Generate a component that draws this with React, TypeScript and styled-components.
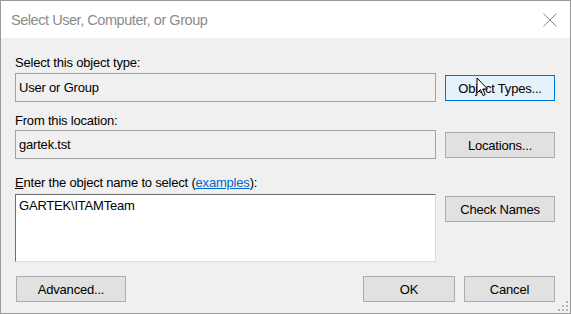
import React from 'react';
import styled, { createGlobalStyle } from 'styled-components';

const GlobalStyle = createGlobalStyle`
  html, body {
    margin: 0;
    padding: 0;
    background: #f0f0f0;
  }
  body {
    font-family: "Liberation Sans", Arial, sans-serif;
    color: #000;
  }
`;

const Window = styled.div`
  position: relative;
  width: 571px;
  height: 314px;
  box-sizing: border-box;
  border: 1px solid #9b9b9b;
  background: #f0f0f0;
  display: flex;
  flex-direction: column;
  overflow: hidden;
  letter-spacing: -0.2px;
`;

const TitleBar = styled.div`
  height: 37px;
  flex: none;
  background: #fff;
  display: flex;
  align-items: center;
  justify-content: space-between;
  padding: 0 13px 0 10px;
`;

const Title = styled.span`
  font-size: 14.5px;
  color: #8c8c8c;
  letter-spacing: -0.45px;
`;

const CloseIcon = styled.svg`
  width: 14px;
  height: 14px;
  margin-top: 1px;
`;

const Body = styled.div`
  display: flex;
  flex-direction: column;
  padding: 17px 15px 0 14px;
`;

const Section = styled.div<{ $top: number }>`
  margin-top: ${({ $top }) => $top}px;
`;

const Label = styled.div<{ $gap: number }>`
  font-size: 13px;
  line-height: 15px;
  height: 15px;
  width: 421px;
  margin-bottom: ${({ $gap }) => $gap}px;
  white-space: nowrap;
`;

const Key = styled.span`
  text-decoration: underline;
`;

const Link = styled.a`
  color: #0066cc;
  text-decoration: underline;
`;

const Row = styled.div`
  display: flex;
  gap: 9px;
  align-items: flex-start;
`;

const TextBox = styled.div`
  width: 421px;
  height: 29px;
  box-sizing: border-box;
  border: 1px solid #a2a2a2;
  background: #f0f0f0;
  padding: 0 3px;
  font-size: 13px;
  display: flex;
  align-items: center;
`;

const TextArea = styled.div`
  width: 421px;
  height: 68px;
  box-sizing: border-box;
  background: #fff;
  border-top: 1px solid #6e6e6e;
  border-left: 1px solid #6e6e6e;
  border-right: 1px solid #dcdcdc;
  border-bottom: 1px solid #dcdcdc;
  padding: 3px 3px;
  font-size: 13px;
  line-height: 15px;
`;

const Button = styled.div<{ $width?: number; $hover?: boolean }>`
  width: ${({ $width }) => $width ?? 110}px;
  height: 26px;
  margin-top: 2px;
  box-sizing: border-box;
  border: 1px solid ${({ $hover }) => ($hover ? '#0078d7' : '#adadad')};
  background: ${({ $hover }) => ($hover ? '#e5f1fb' : '#e1e1e1')};
  font-size: 13px;
  display: flex;
  align-items: center;
  justify-content: center;
  flex: none;
`;

const Footer = styled.div`
  margin-top: 12px;
  padding-left: 1px;
  display: flex;
  justify-content: space-between;
`;

const FooterRight = styled.div`
  display: flex;
  gap: 9px;
`;

const Cursor = styled.svg`
  position: absolute;
  left: 475px;
  top: 76px;
  width: 13px;
  height: 20px;
`;

const Grip = styled.svg`
  position: absolute;
  right: 2px;
  bottom: 2px;
  width: 10px;
  height: 10px;
`;

const App: React.FC = () => {
  return (
    <>
      <GlobalStyle />
      <Window>
        <TitleBar>
          <Title>Select User, Computer, or Group</Title>
          <CloseIcon viewBox="0 0 14 14">
            <path d="M0.5 0.5 L13.5 13.5 M13.5 0.5 L0.5 13.5" stroke="#8a8a8a" strokeWidth="1" />
          </CloseIcon>
        </TitleBar>
        <Body>
          <Section $top={0}>
            <Label $gap={3}>Select this object type:</Label>
            <Row>
              <TextBox>User or Group</TextBox>
              <Button $hover>Object Types...</Button>
            </Row>
          </Section>
          <Section $top={11}>
            <Label $gap={2}>From this location:</Label>
            <Row>
              <TextBox>gartek.tst</TextBox>
              <Button>Locations...</Button>
            </Row>
          </Section>
          <Section $top={16}>
            <Label $gap={4}>
              <Key>E</Key>nter the object name to select (<Link>examples</Link>):
            </Label>
            <Row>
              <TextArea>GARTEK\ITAMTeam</TextArea>
              <Button>Check Names</Button>
            </Row>
          </Section>
          <Footer>
            <Button $width={110}>Advanced...</Button>
            <FooterRight>
              <Button $width={92}>OK</Button>
              <Button $width={91}>Cancel</Button>
            </FooterRight>
          </Footer>
        </Body>
        <Cursor viewBox="0 0 13 20">
          <path
            d="M1 1 L1 16 L4.5 12.5 L7 18.5 L9.2 17.6 L6.8 12 L11.5 12 Z"
            fill="#fff"
            stroke="#000"
            strokeWidth="1"
            strokeLinejoin="miter"
          />
        </Cursor>
        <Grip viewBox="0 0 10 10">
          <g fill="#b4b4b4">
            <rect x="8" y="0" width="2" height="2" />
            <rect x="4" y="4" width="2" height="2" />
            <rect x="8" y="4" width="2" height="2" />
            <rect x="0" y="8" width="2" height="2" />
            <rect x="4" y="8" width="2" height="2" />
            <rect x="8" y="8" width="2" height="2" />
          </g>
        </Grip>
      </Window>
    </>
  );
};

export default App;
